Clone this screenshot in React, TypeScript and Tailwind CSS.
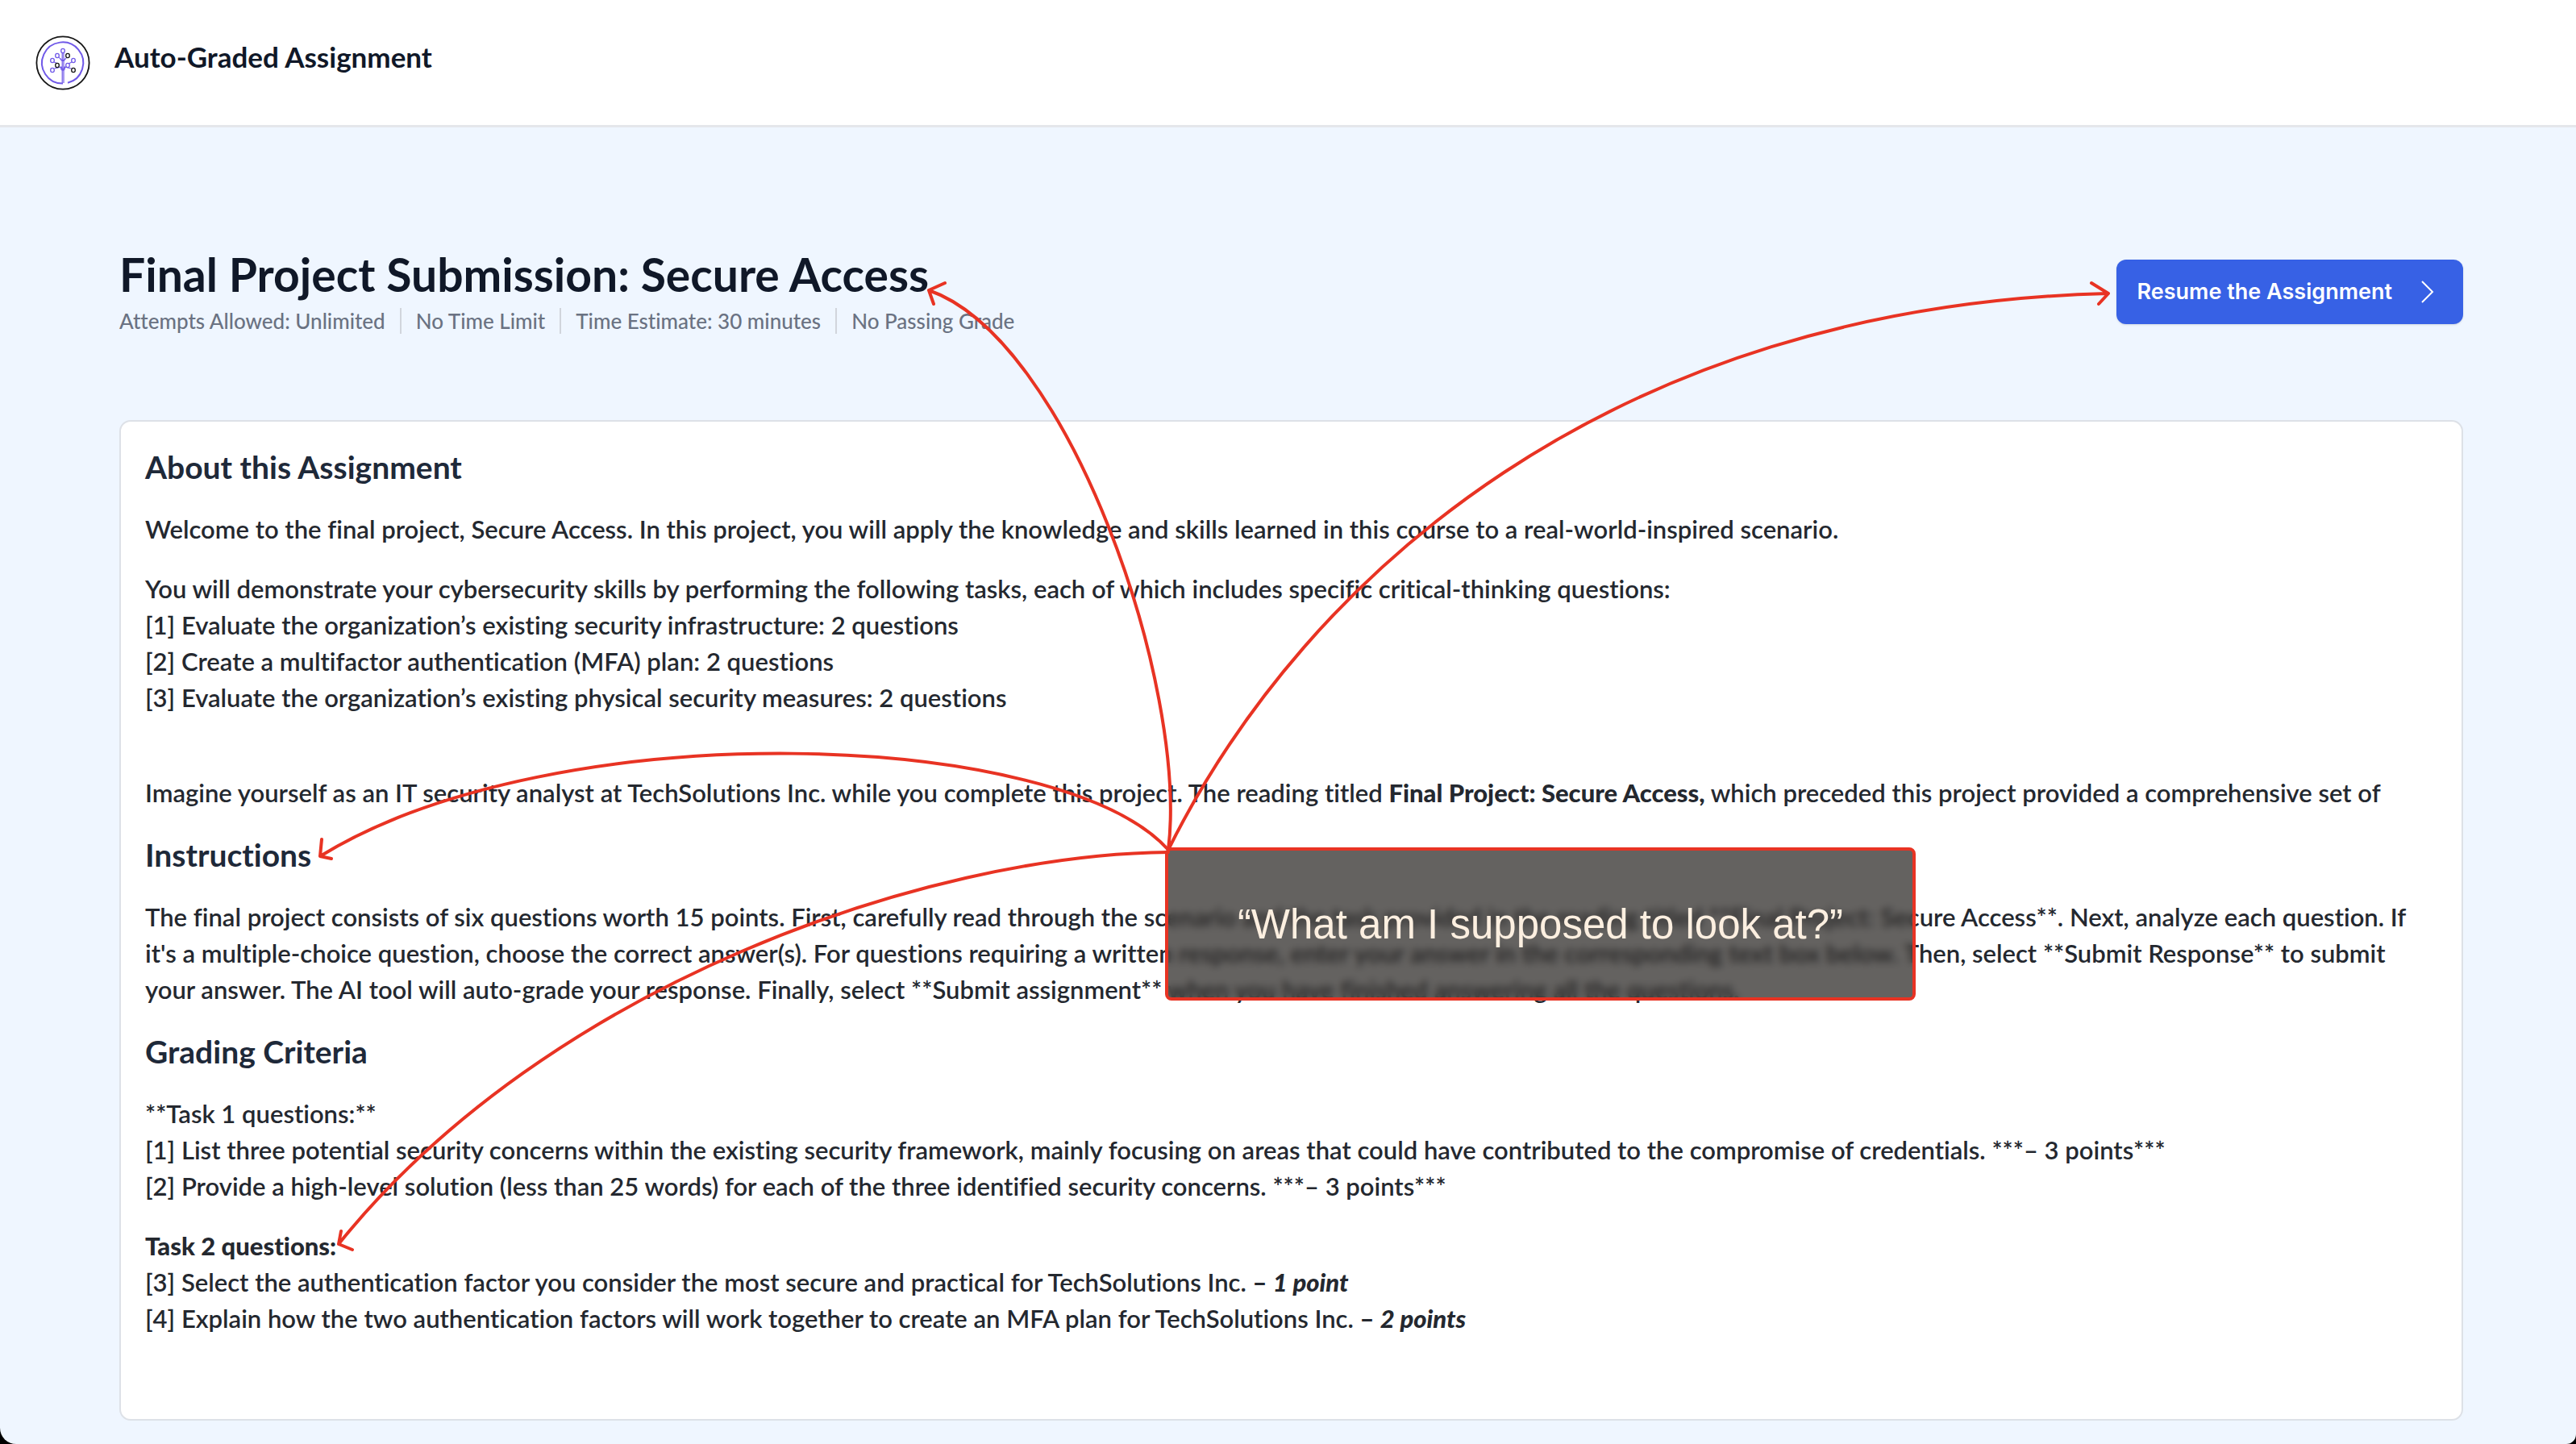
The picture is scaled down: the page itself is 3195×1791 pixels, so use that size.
import React from "react";

const PURPLE = "#7059e8";
const BLACK = "#151515";

function Logo() {
  const nodes: [number, number, string][] = [
    [48, 32, PURPLE],
    [41, 38, PURPLE],
    [54, 38, BLACK],
    [35, 44, PURPLE],
    [61, 44, PURPLE],
    [41, 50, BLACK],
    [54, 50, PURPLE],
    [35, 56, PURPLE],
    [61, 56, BLACK],
  ];
  return (
    <svg viewBox="14 13 68 68" className="size-[68px] shrink-0" fill="none" aria-hidden="true">
      <circle cx="48" cy="47" r="32.6" stroke={BLACK} strokeWidth="1.8" />
      <path d="M48 72.6A25.6 25.6 0 1 1 54 71.8" stroke={PURPLE} strokeWidth="2" />
      <path d="M47.2 34v38M49 34v38" stroke={PURPLE} strokeWidth="1.2" />
      <path
        d="M43 40l3 3.5h4l3-3.5M37 46l5 2M59 46l-4 2M37.500 54l8.500-2 2 4 2-4 8.500 2M45.500 52.500c0 5 5 5 5 0M45.500 41.500c0 4 5 4 5 0"
        stroke={PURPLE}
        strokeWidth="1.1"
      />
      {nodes.map(([x, y, color]) => (
        <ellipse key={`${x}-${y}`} cx={x} cy={y} rx="2.3" ry="2.6" fill="#fff" stroke={color} strokeWidth="1.3" />
      ))}
    </svg>
  );
}

function Arrows() {
  return (
    <svg
      viewBox="0 0 3195 1791"
      className="pointer-events-none absolute left-0 top-0 h-[1791px] w-[3195px]"
      fill="none"
      stroke="#e83323"
      strokeWidth="4"
      strokeLinecap="round"
      strokeLinejoin="round"
      aria-hidden="true"
    >
      <path d="M1449 1054C1474 850 1325 420 1152 360M1172 351L1152 360L1158 377" />
      <path d="M1449 1054C1620 710 2000 380 2614 364M2594 351L2615 364L2603 377" />
      <path d="M1449 1054C1315 905 690 882 397 1062M399 1041L397 1062L411 1065" />
      <path d="M1449 1057C1150 1060 680 1220 420 1543M423 1527L420 1543L437 1550" />
    </svg>
  );
}

function Callout() {
  return (
    <div className="absolute left-[1445px] top-[1051px] flex h-[190px] w-[931px] items-center justify-center rounded-lg border-4 border-[#e83323] bg-[rgba(34,31,28,0.7)] text-[51px] leading-none text-[#fcefe0] backdrop-blur-[5px] font-['Liberation_Sans',sans-serif]">
      “What am I supposed to look at?”
    </div>
  );
}

const meta = ["Attempts Allowed: Unlimited", "No Time Limit", "Time Estimate: 30 minutes", "No Passing Grade"];

function SectionTitle({ children }: { children: React.ReactNode }) {
  return <h2 className="text-[39px] font-bold leading-[45px] text-gray-800">{children}</h2>;
}

export default function App() {
  return (
    <div className="relative min-h-screen overflow-hidden bg-black font-[Lato,sans-serif] [font-variant-ligatures:no-common-ligatures]">
      <div className="min-h-screen rounded-bl-[20px] rounded-br-xl bg-blue-50">
        <header className="flex h-[158px] items-center gap-[30px] border-b-3 border-gray-200 bg-white px-11">
          <Logo />
          <div className="pb-4 text-[35px] font-bold leading-[44px] text-gray-900">Auto-Graded Assignment</div>
        </header>

        <main className="pl-[148px] pr-[140px] pt-[146px]">
          <div className="flex items-start justify-between">
            <div>
              <h1 className="text-[57px] font-bold leading-[72px] text-gray-900">
                Final Project Submission: Secure Access
              </h1>
              <ul className="mt-[6px] flex items-center text-[26px] font-medium leading-[32px] text-gray-500">
                {meta.map((item, i) => (
                  <li key={item} className={i === 0 ? "pr-[18px]" : "border-l-2 border-gray-300 px-[18px]"}>
                    {item}
                  </li>
                ))}
              </ul>
            </div>
            <button
              type="button"
              className="mt-[18px] flex h-20 items-center gap-9 rounded-xl bg-[#3761e5] pl-[26px] pr-9 text-[27px] font-semibold text-white shadow-sm font-[Inter,sans-serif]"
            >
              Resume the Assignment
              <svg viewBox="0 0 16 28" className="h-7 w-4" fill="none" stroke="currentColor" strokeWidth="2" aria-hidden="true">
                <path d="M1 1L14 14L1 27" />
              </svg>
            </button>
          </div>

          <section className="mt-[107px] rounded-[14px] border-2 border-[#dde1e7] bg-white px-[30px] pb-[102px] pt-[34px] text-[31px] font-semibold leading-[45px] text-[#24282f]">
            <SectionTitle>About this Assignment</SectionTitle>
            <div className="mt-8">
              <p>
                Welcome to the final project, Secure Access. In this project, you will apply the knowledge and skills
                learned in this course to a real-world-inspired scenario.
              </p>
              <p className="mt-[29px]">
                You will demonstrate your cybersecurity skills by performing the following tasks, each of which includes
                specific critical-thinking questions:
                <br />
                [1] Evaluate the organization’s existing security infrastructure: 2 questions
                <br />
                [2] Create a multifactor authentication (MFA) plan: 2 questions
                <br />
                [3] Evaluate the organization’s existing physical security measures: 2 questions
              </p>
              <p className="mt-[73px]">
                Imagine yourself as an IT security analyst at TechSolutions Inc. while you complete this project. The
                reading titled <b>Final Project: Secure Access,</b> which preceded this project provided a comprehensive
                set of
              </p>
            </div>

            <div className="mt-8">
              <SectionTitle>Instructions</SectionTitle>
              <p className="mt-8">
                The final project consists of six questions worth 15 points. First, carefully read through the scenario
                and the task provided in the reading titled **Final Project: Secure Access**. Next, analyze each
                question. If
                <br />
                it's a multiple-choice question, choose the correct answer(s). For questions requiring a written
                response, enter your answer in the corresponding text box below. Then, select **Submit Response** to
                submit
                <br />
                your answer. The AI tool will auto-grade your response. Finally, select **Submit assignment** when you
                have finished answering all the questions.
              </p>
            </div>

            <div className="mt-8">
              <SectionTitle>Grading Criteria</SectionTitle>
              <p className="mt-8">
                **Task 1 questions:**
                <br />
                [1] List three potential security concerns within the existing security framework, mainly focusing on
                areas that could have contributed to the compromise of credentials. ***– 3 points***
                <br />
                [2] Provide a high-level solution (less than 25 words) for each of the three identified security
                concerns. ***– 3 points***
              </p>
              <p className="mt-[29px]">
                <b>Task 2 questions:</b>
                <br />
                [3] Select the authentication factor you consider the most secure and practical for TechSolutions Inc.{" "}
                <b>
                  – <i>1 point</i>
                </b>
                <br />
                [4] Explain how the two authentication factors will work together to create an MFA plan for TechSolutions
                Inc.{" "}
                <b>
                  – <i>2 points</i>
                </b>
              </p>
            </div>
          </section>
        </main>
      </div>
      <Callout />
      <Arrows />
    </div>
  );
}
